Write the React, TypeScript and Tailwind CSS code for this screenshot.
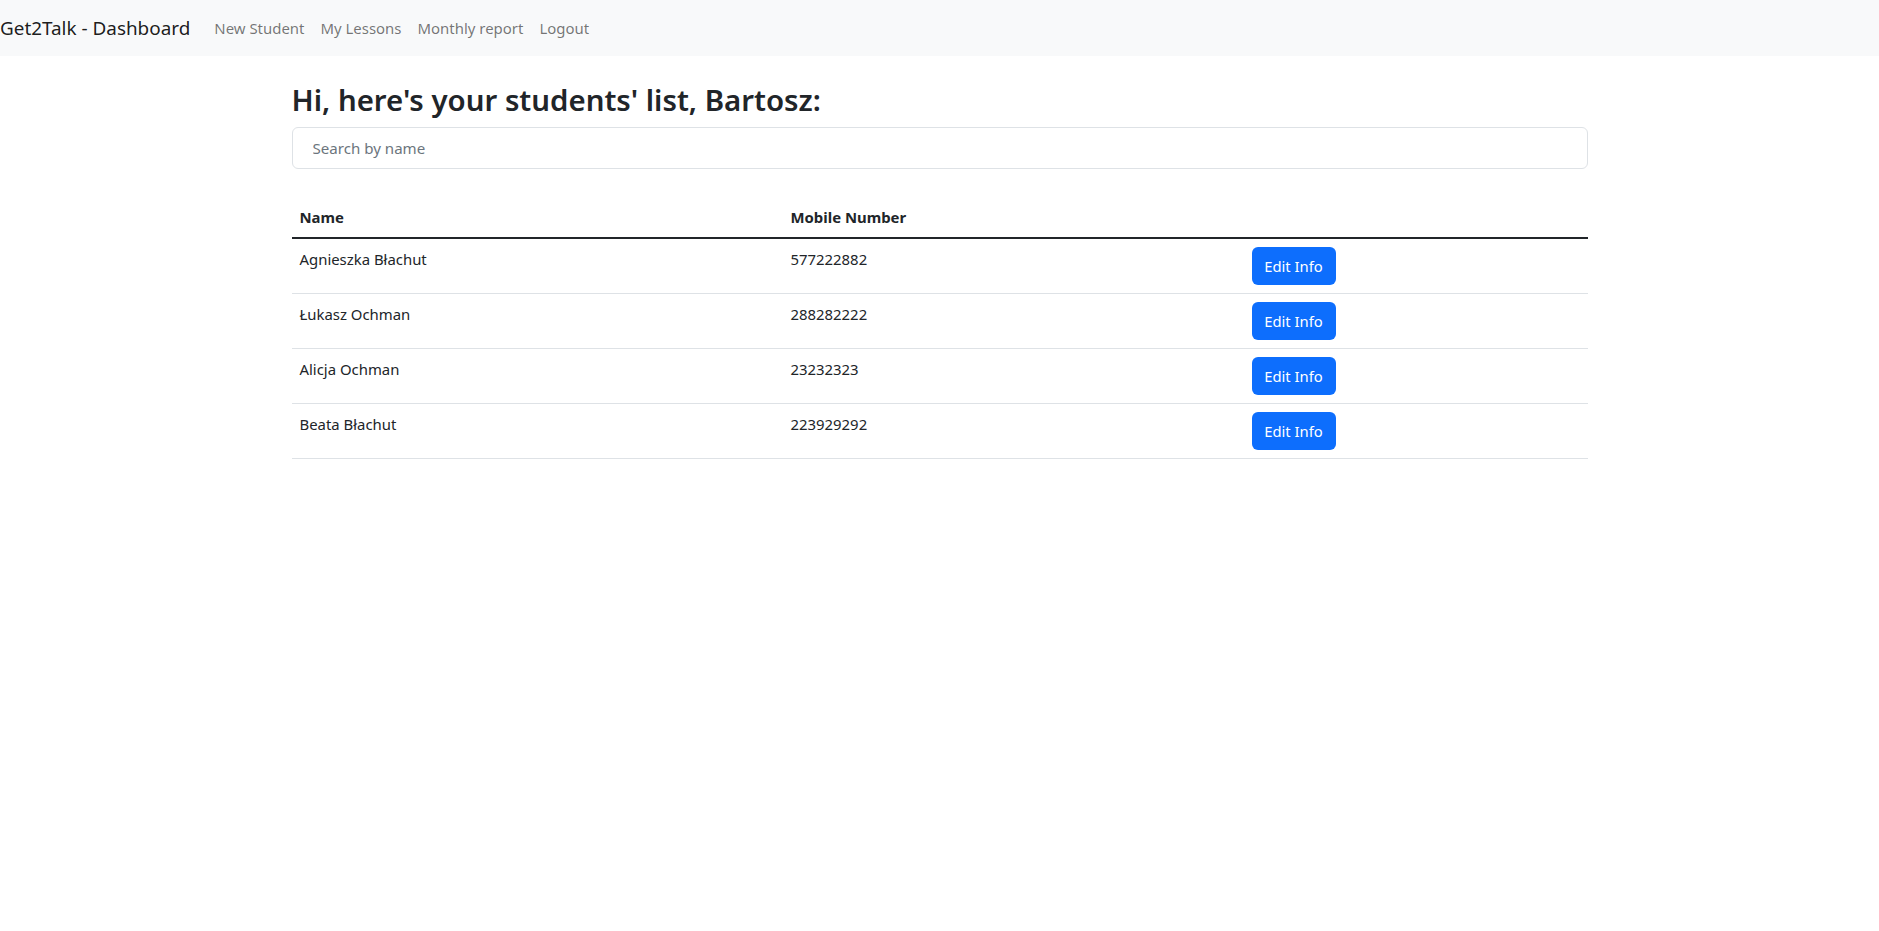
const students = [
  { name: "Agnieszka Błachut", phone: "577222882" },
  { name: "Łukasz Ochman", phone: "288282222" },
  { name: "Alicja Ochman", phone: "23232323" },
  { name: "Beata Błachut", phone: "223929292" },
];

const links = ["New Student", "My Lessons", "Monthly report", "Logout"];

export default function App() {
  return (
    <div className="min-h-screen bg-white font-['Noto_Sans',sans-serif] text-[#212529]">
      <nav className="flex h-[56px] items-center bg-[#f8f9fa]">
        <a href="#" className="mr-4 py-[5px] text-[18.9px] leading-[30px] text-black/90">
          Get2Talk - Dashboard
        </a>
        <ul className="flex">
          {links.map((l) => (
            <li key={l}>
              <a href="#" className="block px-2 py-2 text-[14.95px] leading-6 text-black/55">
                {l}
              </a>
            </li>
          ))}
        </ul>
      </nav>

      <main className="mx-auto w-[1296px] pt-[25px]">
        <h2 className="mb-2 text-[29.4px] font-semibold leading-[38.4px]">
          Hi, here's your students' list, Bartosz:
        </h2>
        <input
          type="text"
          placeholder="Search by name"
          className="block h-[42px] w-full rounded-[6px] border border-[#dee2e6] px-5 text-[15.1px] outline-none placeholder:text-[#6c757d]"
        />

        <table className="mt-[28px] w-full border-collapse text-left text-[14.9px] leading-6">
          <thead>
            <tr>
              <th className="w-[491px] border-b-2 border-[#212529] p-2 font-bold">Name</th>
              <th className="w-[461px] border-b-2 border-[#212529] p-2 font-bold">Mobile Number</th>
              <th className="border-b-2 border-[#212529] p-2"></th>
            </tr>
          </thead>
          <tbody>
            {students.map((s) => (
              <tr key={s.name}>
                <td className="border-b border-[#dee2e6] p-2 align-top">{s.name}</td>
                <td className="border-b border-[#dee2e6] p-2 align-top">{s.phone}</td>
                <td className="border-b border-[#dee2e6] p-2 align-top">
                  <button
                    type="button"
                    className="h-[38px] w-[84px] rounded-[6px] bg-[#0d6efd] text-[14.8px] leading-6 text-white"
                  >
                    Edit Info
                  </button>
                </td>
              </tr>
            ))}
          </tbody>
        </table>
      </main>
    </div>
  );
}
